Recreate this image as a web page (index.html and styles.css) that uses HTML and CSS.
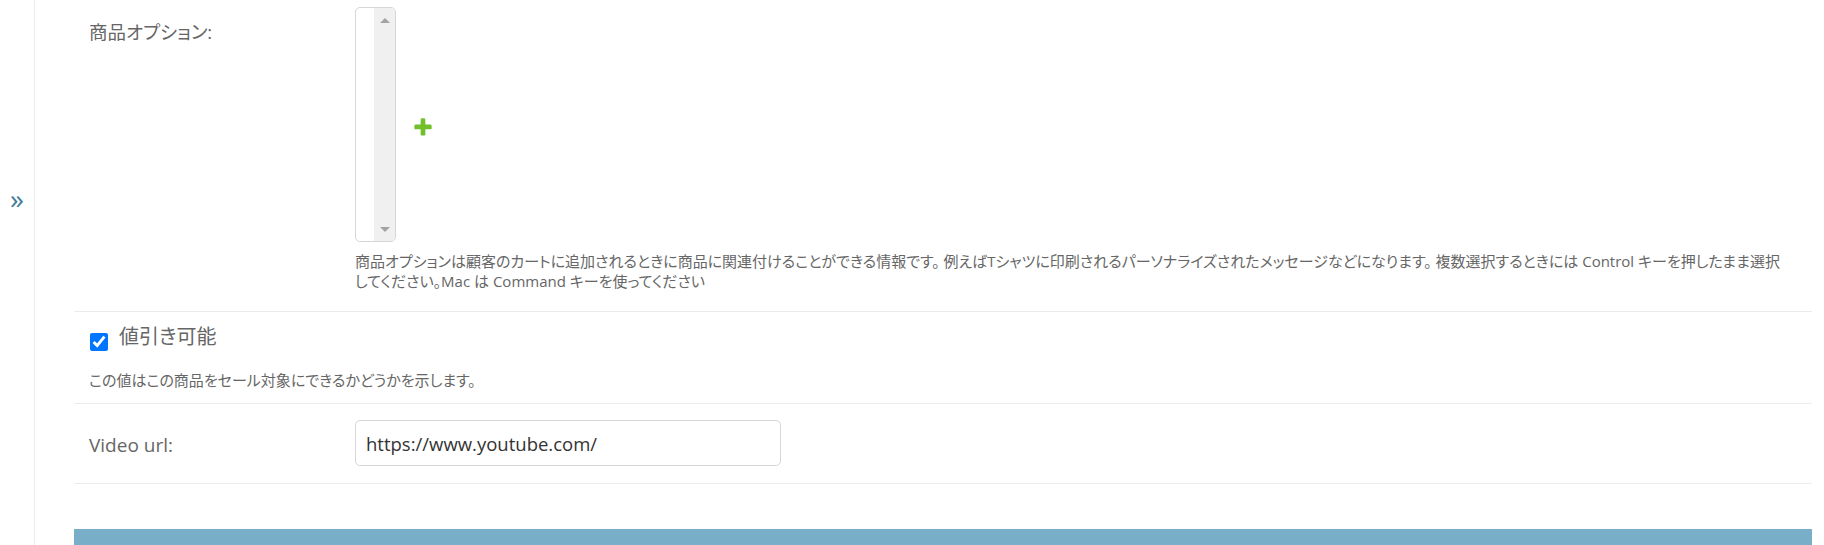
FILE: index.html
```html
<!DOCTYPE html>
<html lang="ja">
<head>
<meta charset="utf-8">
<title>商品の変更</title>
<link rel="stylesheet" href="styles.css">
</head>
<body>
<div class="page">
  <nav class="sidebar">
    <button class="toggle" type="button" aria-label="サイドバーを切り替え">»</button>
  </nav>
  <main class="content">
    <fieldset class="module">
      <div class="form-row row-options">
        <label class="field-label">商品オプション:</label>
        <div class="field-body">
          <div class="related-widget">
            <div class="listbox" role="listbox" aria-multiselectable="true">
              <div class="listbox-list"></div>
              <div class="scrollbar"><span class="arrow up"></span><span class="arrow down"></span></div>
            </div>
            <a class="add-link" href="#" title="追加">
              <svg width="22" height="22" viewBox="0 0 1792 1792" aria-hidden="true"><path fill="#70bf2b" d="M1600 796v192q0 40-28 68t-68 28h-416v416q0 40-28 68t-68 28h-192q-40 0-68-28t-28-68v-416h-416q-40 0-68-28t-28-68v-192q0-40 28-68t68-28h416v-416q0-40 28-68t68-28h192q40 0 68 28t28 68v416h416q40 0 68 28t28 68z"/></svg>
            </a>
          </div>
          <div class="help help-wide">商品オプションは顧客のカートに追加されるときに商品に関連付けることができる情報です。 例えばTシャツに印刷されるパーソナライズされたメッセージなどになります。 複数選択するときには Control キーを押したまま選択してください。Mac は Command キーを使ってください</div>
        </div>
      </div>
      <div class="form-row row-check">
        <div class="check-line">
          <input class="checkbox" type="checkbox" id="id_discountable" checked>
          <label class="check-label" for="id_discountable">値引き可能</label>
        </div>
        <div class="help">この値はこの商品をセール対象にできるかどうかを示します。</div>
      </div>
      <div class="form-row row-url">
        <label class="field-label" for="id_video_url">Video url:</label>
        <div class="field-body">
          <input class="url-input" type="url" id="id_video_url" value="https://www.youtube.com/">
        </div>
      </div>
    </fieldset>
    <div class="submit-bar"></div>
  </main>
</div>
</body>
</html>
```

FILE: styles.css
```css
html, body {
  margin: 0;
  padding: 0;
  background: #fff;
}

body {
  font-family: "Open Sans", "Noto Sans CJK JP", sans-serif;
  color: #333;
}

.page {
  display: flex;
  height: 545px;
  overflow: hidden;
}

.sidebar {
  flex: none;
  width: 35px;
  border-right: 1px solid #ececec;
  display: flex;
  flex-direction: column;
  align-items: center;
  padding-top: 184px;
  box-sizing: border-box;
}

.toggle {
  background: none;
  border: 0;
  padding: 0;
  margin: 0;
  color: #447e9b;
  font-family: "Open Sans", sans-serif;
  font-size: 28px;
  line-height: 28px;
  cursor: pointer;
}

.content {
  flex: 1;
  min-width: 0;
  padding: 0 12px 0 39px;
  display: flex;
  flex-direction: column;
}

.module {
  border: 0;
  margin: 0;
  padding: 0;
  min-width: 0;
}

.form-row {
  display: flex;
  border-bottom: 1px solid #ebebeb;
  padding: 16px 15px 17px;
}

.row-options {
  padding-top: 7px;
  padding-bottom: 20px;
}

.row-check {
  flex-direction: column;
  padding-top: 12px;
  padding-bottom: 13px;
}

.field-label {
  flex: none;
  width: 266px;
  font-size: 19px;
  line-height: 26px;
  color: #666;
  padding-top: 12px;
  font-feature-settings: "palt";
}

.row-options .field-label {
  font-size: 18.5px;
  padding-top: 12px;
}

.field-body {
  flex: 1;
  min-width: 0;
}

.related-widget {
  display: flex;
  align-items: center;
}

.listbox {
  width: 41px;
  height: 235px;
  box-sizing: border-box;
  border: 1px solid #d6d6d6;
  border-radius: 5px;
  display: flex;
  overflow: hidden;
  background: #fff;
}

.listbox-list {
  flex: 1;
}

.scrollbar {
  width: 21px;
  background: #f0f0f0;
  display: flex;
  flex-direction: column;
  justify-content: space-between;
  align-items: center;
  padding: 10px 0 9px;
}

.arrow {
  width: 0;
  height: 0;
  border-left: 5px solid transparent;
  border-right: 5px solid transparent;
}

.arrow.up {
  border-bottom: 5px solid #a3a3a3;
}

.arrow.down {
  border-top: 5px solid #a3a3a3;
}

.add-link {
  display: block;
  margin-left: 16px;
  margin-top: 5px;
  line-height: 0;
}

.help {
  margin-top: 9px;
  font-size: 15px;
  line-height: 20px;
  color: #666;
  font-feature-settings: "palt";
}

.help-wide {
  max-width: 1431px;
}

.check-line {
  display: flex;
  align-items: flex-start;
}

.checkbox {
  width: 18px;
  height: 18px;
  margin: 9px 11px 0 1px;
  accent-color: #0075ff;
}

.check-label {
  font-size: 20px;
  line-height: 26px;
  color: #666;
  font-feature-settings: "palt";
}

.row-check .help {
  margin-top: 19px;
}

.url-input {
  display: block;
  width: 426px;
  height: 46px;
  box-sizing: border-box;
  border: 1px solid #d6d6d6;
  border-radius: 5px;
  padding: 0 10px;
  font-family: inherit;
  font-size: 18.5px;
  color: #333;
  background: #fff;
  outline: none;
}

.submit-bar {
  flex: none;
  margin-top: 45px;
  height: 60px;
  background: #79aec8;
}
```
